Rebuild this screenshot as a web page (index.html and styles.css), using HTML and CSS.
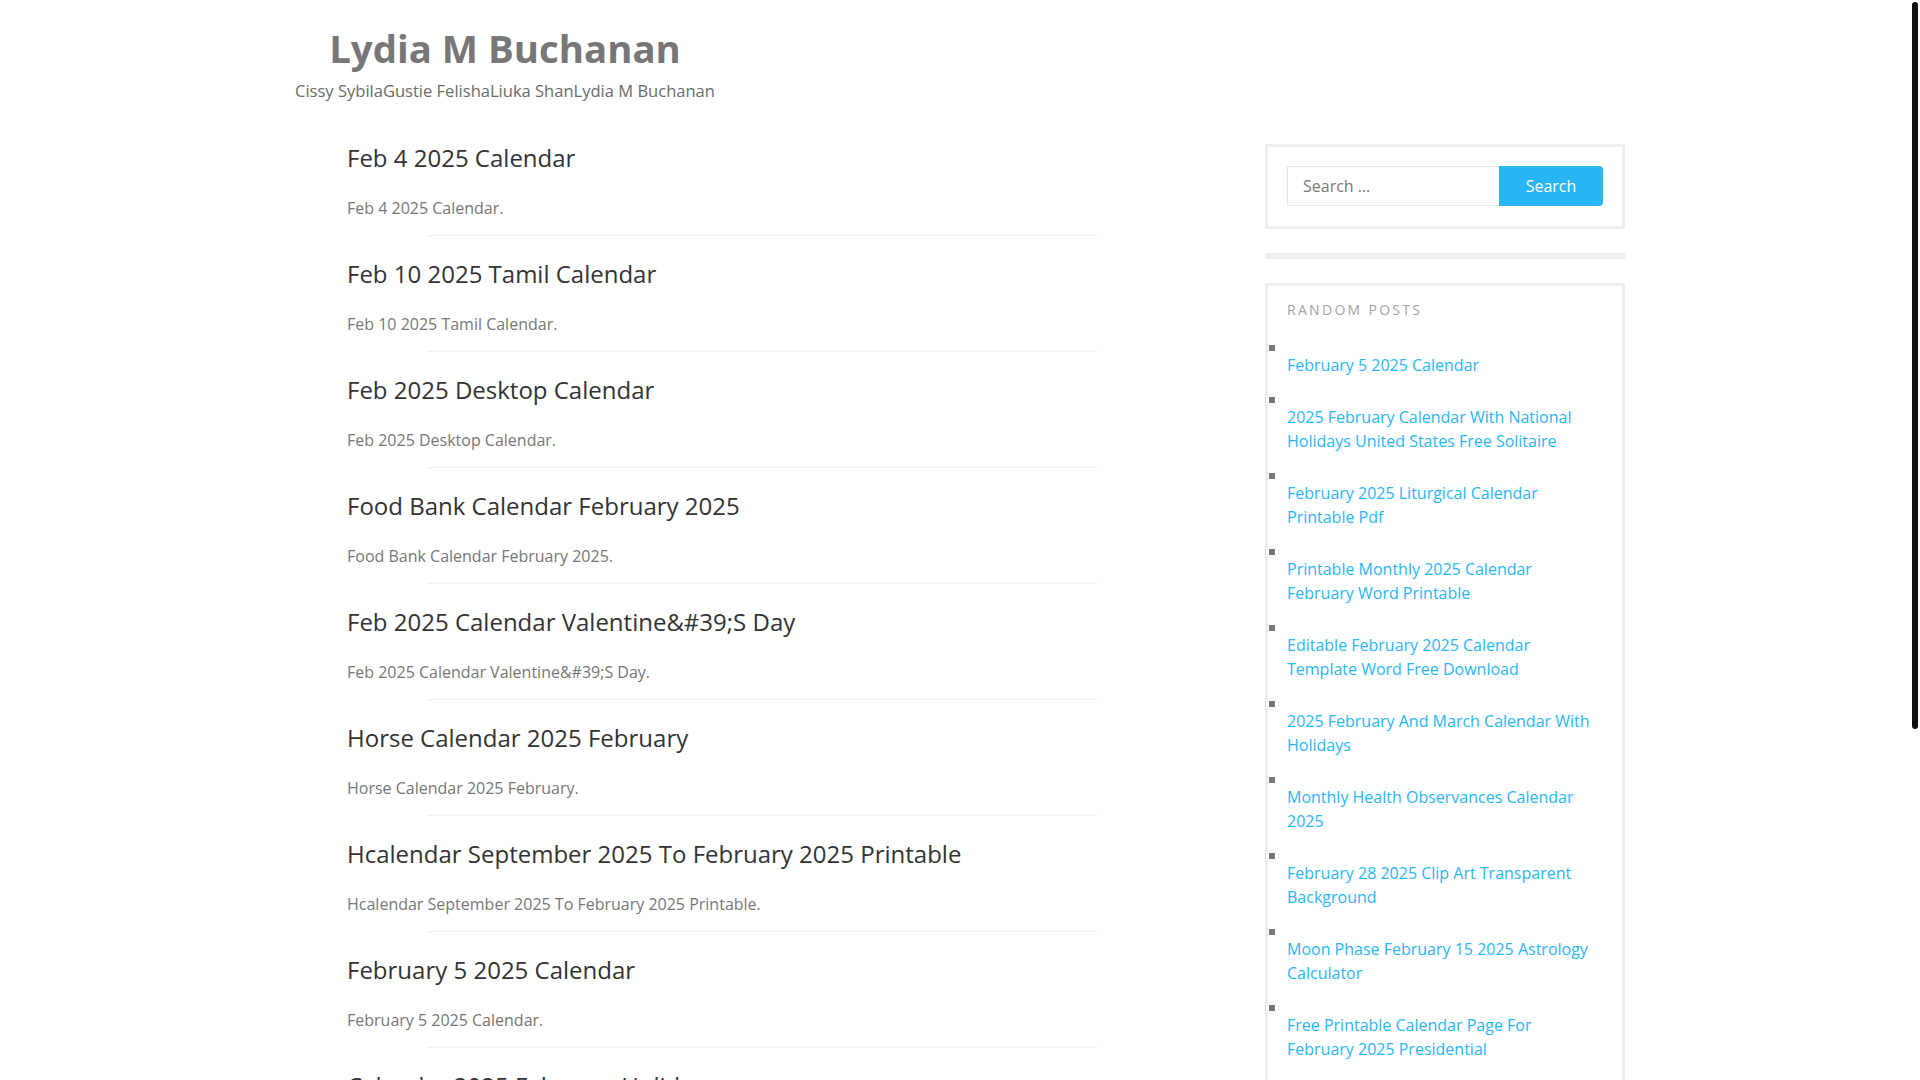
FILE: index.html
```html
<!DOCTYPE html>
<html lang="en">
<head>
<meta charset="utf-8">
<title>Lydia M Buchanan</title>
<link rel="stylesheet" href="styles.css">
</head>
<body>
<div class="page">
  <header class="site-header">
    <div class="branding">
      <h1 class="site-title">Lydia M Buchanan</h1>
      <p class="site-desc">Cissy SybilaGustie FelishaLiuka ShanLydia M Buchanan</p>
    </div>
  </header>
  <div class="content">
    <main class="posts">
      <article class="post">
        <h2 class="post-title">Feb 4 2025 Calendar</h2>
        <p class="post-excerpt">Feb 4 2025 Calendar.</p>
      </article>
      <div class="sep"></div>
      <article class="post">
        <h2 class="post-title">Feb 10 2025 Tamil Calendar</h2>
        <p class="post-excerpt">Feb 10 2025 Tamil Calendar.</p>
      </article>
      <div class="sep"></div>
      <article class="post">
        <h2 class="post-title">Feb 2025 Desktop Calendar</h2>
        <p class="post-excerpt">Feb 2025 Desktop Calendar.</p>
      </article>
      <div class="sep"></div>
      <article class="post">
        <h2 class="post-title">Food Bank Calendar February 2025</h2>
        <p class="post-excerpt">Food Bank Calendar February 2025.</p>
      </article>
      <div class="sep"></div>
      <article class="post">
        <h2 class="post-title">Feb 2025 Calendar Valentine&amp;#39;S Day</h2>
        <p class="post-excerpt">Feb 2025 Calendar Valentine&amp;#39;S Day.</p>
      </article>
      <div class="sep"></div>
      <article class="post">
        <h2 class="post-title">Horse Calendar 2025 February</h2>
        <p class="post-excerpt">Horse Calendar 2025 February.</p>
      </article>
      <div class="sep"></div>
      <article class="post">
        <h2 class="post-title">Hcalendar September 2025 To February 2025 Printable</h2>
        <p class="post-excerpt">Hcalendar September 2025 To February 2025 Printable.</p>
      </article>
      <div class="sep"></div>
      <article class="post">
        <h2 class="post-title">February 5 2025 Calendar</h2>
        <p class="post-excerpt">February 5 2025 Calendar.</p>
      </article>
      <div class="sep"></div>
      <article class="post">
        <h2 class="post-title">Calendar 2025 February Holidays</h2>
        <p class="post-excerpt">Calendar 2025 February Holidays.</p>
      </article>
      <div class="sep"></div>
    </main>
    <aside class="sidebar">
      <section class="widget search-widget">
        <form class="search-form">
          <input class="search-field" type="search" placeholder="Search …">
          <button class="search-submit" type="button">Search</button>
        </form>
      </section>
      <section class="widget empty-widget"></section>
      <section class="widget random-widget">
        <h3 class="widget-title">Random Posts</h3>
        <ul class="random-list">
          <li><a href="#">February 5 2025 Calendar</a></li>
          <li><a href="#">2025 February Calendar With National Holidays United States Free Solitaire</a></li>
          <li><a href="#">February 2025 Liturgical Calendar Printable Pdf</a></li>
          <li><a href="#">Printable Monthly 2025 Calendar February Word Printable</a></li>
          <li><a href="#">Editable February 2025 Calendar Template Word Free Download</a></li>
          <li><a href="#">2025 February And March Calendar With Holidays</a></li>
          <li><a href="#">Monthly Health Observances Calendar 2025</a></li>
          <li><a href="#">February 28 2025 Clip Art Transparent Background</a></li>
          <li><a href="#">Moon Phase February 15 2025 Astrology Calculator</a></li>
          <li><a href="#">Free Printable Calendar Page For February 2025 Presidential</a></li>
        </ul>
      </section>
    </aside>
  </div>
</div>
<div class="scroll-thumb"></div>
</body>
</html>
```
FILE: styles.css
```css
html {
  overflow: hidden;
}
body {
  margin: 0;
  background: #ffffff;
  font-family: "Open Sans", "Noto Sans", sans-serif;
  font-size: 16px;
  line-height: 24px;
  color: #777777;
}
.page {
  width: 1330px;
  margin: 0 auto;
}
.site-header {
  padding-top: 25px;
}
.branding {
  display: inline-block;
  text-align: center;
}
.site-title {
  margin: 0;
  font-size: 38.4px;
  line-height: 46px;
  font-weight: 700;
  color: #777777;
}
.site-desc {
  margin: 8px 0 0;
  font-size: 16.55px;
  line-height: 24px;
  color: #6b6b6b;
}
.content {
  display: flex;
  justify-content: space-between;
  align-items: flex-start;
  margin-top: 39px;
}
.posts {
  width: 750px;
  padding-left: 52px;
}
.post {
  padding-bottom: 15px;
}
.post-title {
  margin: 0 0 22px;
  font-size: 24px;
  line-height: 32px;
  font-weight: 400;
  color: #333333;
}
.post-excerpt {
  margin: 0;
  font-size: 16px;
  line-height: 24px;
  color: #777777;
}
.sep {
  height: 1px;
  background: #eeeeee;
  margin: 0 0 22px 80px;
  width: 670px;
}
.sidebar {
  width: 360px;
  margin-top: 2px;
}
.widget {
  border: 3px solid #eceeef;
  margin-bottom: 24px;
}
.search-widget {
  padding: 19px 19px 20px;
}
.search-form {
  display: flex;
}
.search-field {
  box-sizing: border-box;
  width: 212px;
  height: 40px;
  border: 1px solid #e8e8e8;
  border-right: none;
  padding: 0 15px;
  font-family: "Open Sans", "Noto Sans", sans-serif;
  font-size: 16px;
  color: #777777;
  outline: none;
  background: #ffffff;
}
.search-field::placeholder {
  color: #7a7a7a;
}
.search-submit {
  flex: 1;
  height: 40px;
  border: none;
  border-radius: 0 4px 4px 0;
  background: #29b6f6;
  color: #ffffff;
  font-family: "Open Sans", "Noto Sans", sans-serif;
  font-size: 16px;
  padding: 0;
}
.empty-widget {
  height: 0;
  padding: 0;
}
.random-widget {
  padding: 14px 26px 20px 19px;
}
.widget-title {
  margin: 0 0 25px;
  font-size: 14px;
  line-height: 20px;
  font-weight: 400;
  text-transform: uppercase;
  letter-spacing: 2.3px;
  color: #a3a3a3;
}
.random-list {
  list-style: none;
  margin: 0;
  padding: 0;
}
.random-list li {
  margin-bottom: 20px;
}
.random-list li::before {
  content: "";
  display: block;
  width: 6px;
  height: 6px;
  background: #777777;
  margin-left: -18px;
  margin-bottom: 2px;
}
.random-list a {
  display: block;
  color: #29b6f6;
  text-decoration: none;
  line-height: 24px;
}
.scroll-thumb {
  position: fixed;
  top: 2px;
  right: 2px;
  width: 6px;
  height: 727px;
  border-radius: 3px;
  background: #111111;
}
```
